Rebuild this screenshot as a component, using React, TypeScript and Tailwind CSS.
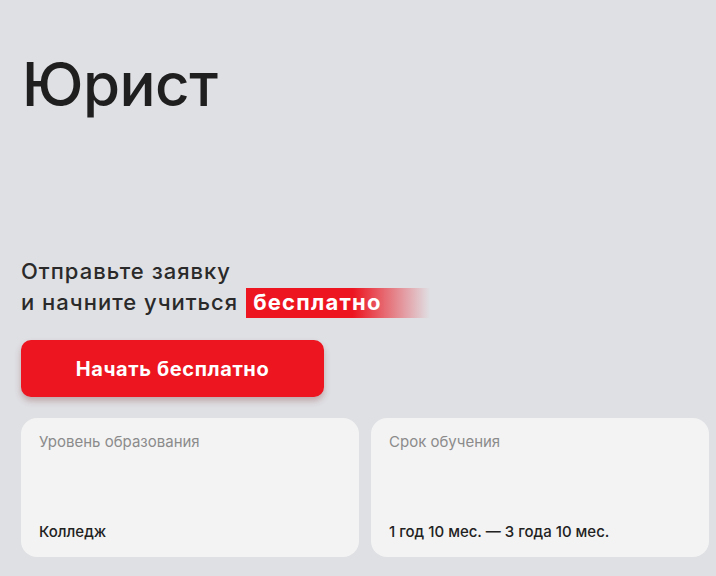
import React from "react";

export default function App() {
  return (
    <div
      className="w-[716px] h-[576px] overflow-hidden bg-[#dfe0e4] text-[#222222]"
      style={{ fontFamily: "Inter, 'Noto Sans', sans-serif" }}
    >
      <div className="pl-[21px] pt-[48px] flex flex-col">
        <h1 className="text-[60px] leading-[72px] font-medium tracking-[-0.5px] text-[#1f1f1f] pl-[1px]">Юрист</h1>
        <div className="mt-[136px] text-[22px] leading-[31px] font-medium text-[#2a2a2a] tracking-[1px]">
          <div>Отправьте заявку</div>
          <div className="flex items-center">
            <span>и начните учиться</span>
            <span className="ml-[8px] h-[30px] w-[184px] flex items-center pl-[7px] text-white font-bold tracking-[1.2px] bg-[linear-gradient(90deg,#ec1520_0%,#ec1520_58%,rgba(236,21,32,0)_100%)]">
              бесплатно
            </span>
          </div>
        </div>
        <button className="mt-[22px] w-[303px] h-[57px] rounded-[10px] bg-[#ec1520] text-white text-[20px] font-bold tracking-[0.6px] shadow-[0_4px_6px_rgba(120,40,40,0.3)]">
          Начать бесплатно
        </button>
        <div className="mt-[21px] flex gap-[12px]">
          <div className="w-[338px] h-[139px] rounded-[16px] bg-[#f3f3f3] px-[18px] pt-[13px] pb-[14px] flex flex-col justify-between">
            <div className="text-[15px] text-[#8b8b8b]">Уровень образования</div>
            <div className="text-[15px] font-medium text-[#222]">Колледж</div>
          </div>
          <div className="w-[338px] h-[139px] rounded-[16px] bg-[#f3f3f3] px-[18px] pt-[13px] pb-[14px] flex flex-col justify-between">
            <div className="text-[15px] text-[#8b8b8b]">Срок обучения</div>
            <div className="text-[15px] font-medium text-[#222]">1 год 10 мес. — 3 года 10 мес.</div>
          </div>
        </div>
      </div>
    </div>
  );
}
